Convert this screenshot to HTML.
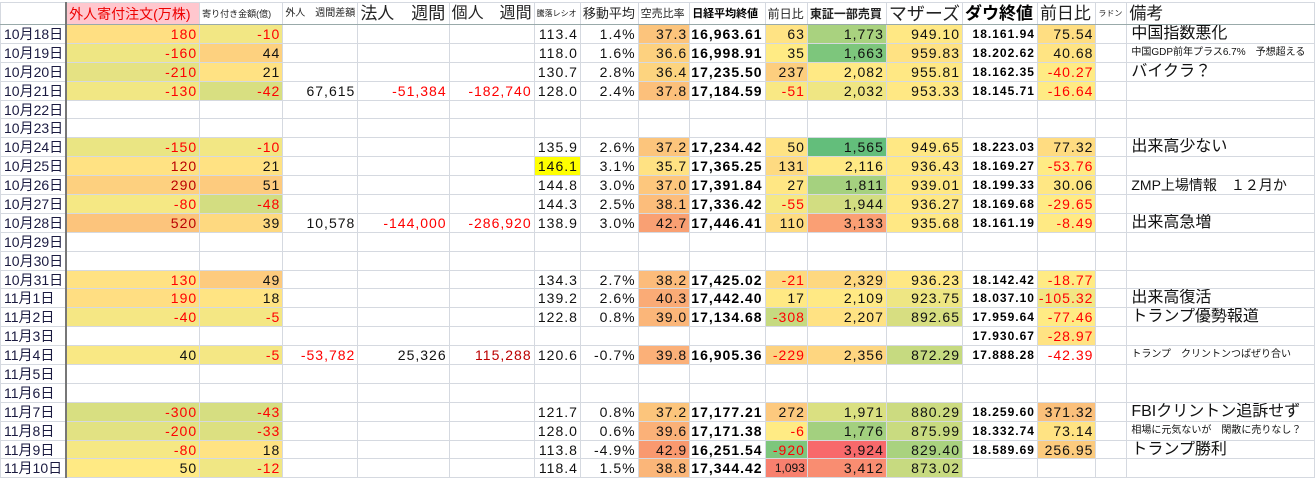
<!DOCTYPE html>
<html><head><meta charset="utf-8">
<style>
html,body{margin:0;padding:0;background:#fff;}
body{width:1315px;height:479px;overflow:hidden;position:relative;font-family:"Liberation Sans","Noto Sans CJK JP",sans-serif;}
table{border-collapse:collapse;table-layout:fixed;position:absolute;left:0;top:2px;}
td{border:1px solid #d5d9e0;padding:0 2px 0 0;text-align:right;white-space:nowrap;overflow:hidden;font-size:14px;color:#111;line-height:16px;letter-spacing:1px;}
tr{height:18.9px;}
tr.h{height:22px;}
tr.h td{font-size:11px;text-align:left;padding-left:2px;color:#222;border-bottom:1px solid #9aa;letter-spacing:0;}
td.d{text-align:left;padding-left:3px;font-size:14px;color:#1a1a40;border-right:2px solid #777;letter-spacing:0;}
.r{color:#f00;}
.dr{color:#b00;}
.b{font-weight:bold;font-size:14px;color:#000;}
.dw{font-weight:bold;font-size:12px;color:#000;}
.c{text-align:left!important;padding-left:4px;font-size:16px;letter-spacing:0;}
.cs{text-align:left!important;padding-left:4px;font-size:10px;letter-spacing:0;}
</style></head><body>
<table>
<colgroup>
<col style="width:62px"><col style="width:137px"><col style="width:88px"><col style="width:74px"><col style="width:92px"><col style="width:75px"><col style="width:47px"><col style="width:58px"><col style="width:53px"><col style="width:76px"><col style="width:43px"><col style="width:80px"><col style="width:72px"><col style="width:76px"><col style="width:59px"><col style="width:32px"><col style="width:191px">
</colgroup>
<tr class="h"><td class="d" style="border-bottom:1px solid #9aa"></td><td style="background:#ffc7ce;color:#e00;font-size:14px">外人寄付注文(万株)</td><td style="font-size:9px">寄り付き金額(億)</td><td style="font-size:10px">外人　週間差額</td><td style="font-size:17px">法人　週間</td><td style="font-size:16px">個人　週間</td><td style="font-size:8px">騰落レシオ</td><td style="font-size:13px">移動平均</td><td style="font-size:11px">空売比率</td><td style="font-size:11px;font-weight:bold;color:#000">日経平均終値</td><td style="font-size:12px">前日比</td><td style="font-size:12px;font-weight:bold">東証一部売買</td><td style="font-size:18px">マザーズ</td><td style="font-size:17px;font-weight:bold;color:#000">ダウ終値</td><td style="font-size:17px">前日比</td><td style="font-size:8px">ラドン</td><td style="font-size:17px">備考</td></tr>
<tr><td class="d">10月18日</td><td class="r" style="background:#ffdf82">180</td><td class="r" style="background:#f2e784">-10</td><td></td><td></td><td></td><td>113.4</td><td>1.4%</td><td style="background:#fcc47c">37.3</td><td class="b">16,963.61</td><td style="background:#ffe384">63</td><td style="background:#a9d27f">1,773</td><td style="background:#ffe884">949.10</td><td class="dw">18.161.94</td><td style="background:#ffde82">75.54</td><td></td><td class="c">中国指数悪化</td></tr>
<tr><td class="d">10月19日</td><td class="r" style="background:#eee683">-160</td><td style="background:#fdd17f">44</td><td></td><td></td><td></td><td>118.0</td><td>1.6%</td><td style="background:#fdd17f">36.6</td><td class="b">16,998.91</td><td style="background:#ffeb84">35</td><td style="background:#7dc67c">1,663</td><td style="background:#ffe283">959.83</td><td class="dw">18.202.62</td><td style="background:#ffe483">40.68</td><td></td><td class="cs">中国GDP前年プラス6.7%　予想超える</td></tr>
<tr><td class="d">10月20日</td><td class="r" style="background:#e5e283">-210</td><td style="background:#ffe283">21</td><td></td><td></td><td></td><td>130.7</td><td>2.8%</td><td style="background:#fdd47f">36.4</td><td class="b">17,235.50</td><td style="background:#fdce7e">237</td><td style="background:#ffe984">2,082</td><td style="background:#ffe884">955.81</td><td class="dw">18.162.35</td><td class="r" style="background:#ffeb84">-40.27</td><td></td><td class="c">バイクラ？</td></tr>
<tr><td class="d">10月21日</td><td class="r" style="background:#f1e784">-130</td><td class="r" style="background:#d8df81">-42</td><td>67,615</td><td class="r">-51,384</td><td class="r">-182,740</td><td>128.0</td><td>2.4%</td><td style="background:#fcc07b">37.8</td><td class="b">17,184.59</td><td class="r" style="background:#f9e884">-51</td><td style="background:#efe683">2,032</td><td style="background:#ffe884">953.33</td><td class="dw">18.145.71</td><td class="r" style="background:#ffeb84">-16.64</td><td></td><td></td></tr>
<tr><td class="d">10月22日</td><td></td><td></td><td></td><td></td><td></td><td></td><td></td><td></td><td></td><td></td><td></td><td></td><td></td><td></td><td></td><td></td></tr>
<tr><td class="d">10月23日</td><td></td><td></td><td></td><td></td><td></td><td></td><td></td><td></td><td></td><td></td><td></td><td></td><td></td><td></td><td></td><td></td></tr>
<tr><td class="d">10月24日</td><td class="r" style="background:#eae583">-150</td><td class="r" style="background:#f2e784">-10</td><td></td><td></td><td></td><td>135.9</td><td>2.6%</td><td style="background:#fcc57c">37.2</td><td class="b">17,234.42</td><td style="background:#ffe384">50</td><td style="background:#63be7b">1,565</td><td style="background:#ffe884">949.65</td><td class="dw">18.223.03</td><td style="background:#ffdc81">77.32</td><td></td><td class="c">出来高少ない</td></tr>
<tr><td class="d">10月25日</td><td class="dr" style="background:#ffe283">120</td><td style="background:#ffe283">21</td><td></td><td></td><td></td><td style="background:#ffff00">146.1</td><td>3.1%</td><td style="background:#ffe283">35.7</td><td class="b">17,365.25</td><td style="background:#feda81">131</td><td style="background:#ffe984">2,116</td><td style="background:#ffe884">936.43</td><td class="dw">18.169.27</td><td class="r" style="background:#ffeb84">-53.76</td><td></td><td></td></tr>
<tr><td class="d">10月26日</td><td class="dr" style="background:#fdd07f">290</td><td style="background:#fdcb7e">51</td><td></td><td></td><td></td><td>144.8</td><td>3.0%</td><td style="background:#fdc77d">37.0</td><td class="b">17,391.84</td><td style="background:#ffe784">27</td><td style="background:#a5d17f">1,811</td><td style="background:#ffe884">939.01</td><td class="dw">18.199.33</td><td style="background:#ffe784">30.06</td><td></td><td class="c" style="font-size:14px">ZMP上場情報　１２月か</td></tr>
<tr><td class="d">10月27日</td><td class="r" style="background:#f5e884">-80</td><td class="r" style="background:#d3dd81">-48</td><td></td><td></td><td></td><td>144.3</td><td>2.5%</td><td style="background:#fcbd7b">38.1</td><td class="b">17,336.42</td><td class="r" style="background:#f6e884">-55</td><td style="background:#d2dd81">1,944</td><td style="background:#ffe884">936.27</td><td class="dw">18.169.68</td><td class="r" style="background:#ffeb84">-29.65</td><td></td><td></td></tr>
<tr><td class="d">10月28日</td><td class="dr" style="background:#fcc47c">520</td><td style="background:#fed980">39</td><td>10,578</td><td class="r">-144,000</td><td class="r">-286,920</td><td>138.9</td><td>3.0%</td><td style="background:#f9a073">42.7</td><td class="b">17,446.41</td><td style="background:#fedc81">110</td><td style="background:#fa9f74">3,133</td><td style="background:#ffe884">935.68</td><td class="dw">18.161.19</td><td class="r" style="background:#ffea84">-8.49</td><td></td><td class="c">出来高急増</td></tr>
<tr><td class="d">10月29日</td><td></td><td></td><td></td><td></td><td></td><td></td><td></td><td></td><td></td><td></td><td></td><td></td><td></td><td></td><td></td><td></td></tr>
<tr><td class="d">10月30日</td><td></td><td></td><td></td><td></td><td></td><td></td><td></td><td></td><td></td><td></td><td></td><td></td><td></td><td></td><td></td><td></td></tr>
<tr><td class="d">10月31日</td><td class="r" style="background:#ffe283">130</td><td style="background:#fdcb7e">49</td><td></td><td></td><td></td><td>134.3</td><td>2.7%</td><td style="background:#fcbc7b">38.2</td><td class="b">17,425.02</td><td class="r" style="background:#fed980">-21</td><td style="background:#fed880">2,329</td><td style="background:#ffe884">936.23</td><td class="dw">18.142.42</td><td class="r" style="background:#ffeb84">-18.77</td><td></td><td></td></tr>
<tr><td class="d">11月1日</td><td class="r" style="background:#ffde82">190</td><td style="background:#ffe483">18</td><td></td><td></td><td></td><td>139.2</td><td>2.6%</td><td style="background:#faab76">40.3</td><td class="b">17,442.40</td><td style="background:#ffe984">17</td><td style="background:#ffe984">2,109</td><td style="background:#eee683">923.75</td><td class="dw">18.037.10</td><td class="r" style="background:#f2e784">-105.32</td><td></td><td class="c">出来高復活</td></tr>
<tr><td class="d">11月2日</td><td class="r" style="background:#f5e784">-40</td><td class="r" style="background:#f4e784">-5</td><td></td><td></td><td></td><td>122.8</td><td>0.8%</td><td style="background:#fbb679">39.0</td><td class="b">17,134.68</td><td class="r" style="background:#c6da80">-308</td><td style="background:#ffe283">2,207</td><td style="background:#d7de81">892.65</td><td class="dw">17.959.64</td><td class="r" style="background:#ffeb84">-77.46</td><td></td><td class="c">トランプ優勢報道</td></tr>
<tr><td class="d">11月3日</td><td></td><td></td><td></td><td></td><td></td><td></td><td></td><td></td><td></td><td></td><td></td><td></td><td class="dw">17.930.67</td><td class="r" style="background:#ffe383">-28.97</td><td></td><td></td></tr>
<tr><td class="d">11月4日</td><td style="background:#f9e884">40</td><td class="r" style="background:#f4e784">-5</td><td class="r">-53,782</td><td>25,326</td><td class="dr">115,288</td><td>120.6</td><td>-0.7%</td><td style="background:#fbb078">39.8</td><td class="b">16,905.36</td><td class="r" style="background:#fdd27f">-229</td><td style="background:#fed680">2,356</td><td style="background:#c6da80">872.29</td><td class="dw">17.888.28</td><td class="r">-42.39</td><td></td><td class="cs">トランプ　クリントンつばぜり合い</td></tr>
<tr><td class="d">11月5日</td><td></td><td></td><td></td><td></td><td></td><td></td><td></td><td></td><td></td><td></td><td></td><td></td><td></td><td></td><td></td><td></td></tr>
<tr><td class="d">11月6日</td><td></td><td></td><td></td><td></td><td></td><td></td><td></td><td></td><td></td><td></td><td></td><td></td><td></td><td></td><td></td><td></td></tr>
<tr><td class="d">11月7日</td><td class="r" style="background:#d8df81">-300</td><td class="r" style="background:#d6de81">-43</td><td></td><td></td><td></td><td>121.7</td><td>0.8%</td><td style="background:#fcc57c">37.2</td><td class="b">17,177.21</td><td style="background:#fdc97e">272</td><td style="background:#dae081">1,971</td><td style="background:#ccdb80">880.29</td><td class="dw">18.259.60</td><td style="background:#fbc07b">371.32</td><td></td><td class="c">FBIクリントン追訴せず</td></tr>
<tr><td class="d">11月8日</td><td class="r" style="background:#e2e283">-200</td><td class="r" style="background:#dce081">-33</td><td></td><td></td><td></td><td>128.0</td><td>0.6%</td><td style="background:#fbb178">39.6</td><td class="b">17,171.38</td><td class="r" style="background:#ffeb84">-6</td><td style="background:#a3d07f">1,776</td><td style="background:#c9db80">875.99</td><td class="dw">18.332.74</td><td style="background:#ffe383">73.14</td><td></td><td class="cs">相場に元気ないが　閑散に売りなし？</td></tr>
<tr><td class="d">11月9日</td><td class="r" style="background:#f5e884">-80</td><td style="background:#ffe383">18</td><td></td><td></td><td></td><td>113.8</td><td>-4.9%</td><td style="background:#f9996f">42.9</td><td class="b">16,251.54</td><td class="r" style="background:#7dc67c">-920</td><td style="background:#f8696b">3,924</td><td style="background:#a9d27f">829.40</td><td class="dw">18.589.69</td><td style="background:#fccb7e">256.95</td><td></td><td class="c">トランプ勝利</td></tr>
<tr><td class="d">11月10日</td><td style="background:#ffea84">50</td><td class="r" style="background:#f0e784">-12</td><td></td><td></td><td></td><td>118.4</td><td>1.5%</td><td style="background:#fbb679">38.8</td><td class="b">17,344.42</td><td style="background:#f8806e;font-size:12px;letter-spacing:0">1,093</td><td style="background:#f98d71">3,412</td><td style="background:#c7da80">873.02</td><td></td><td></td><td></td><td></td></tr>
</table>
</body></html>
